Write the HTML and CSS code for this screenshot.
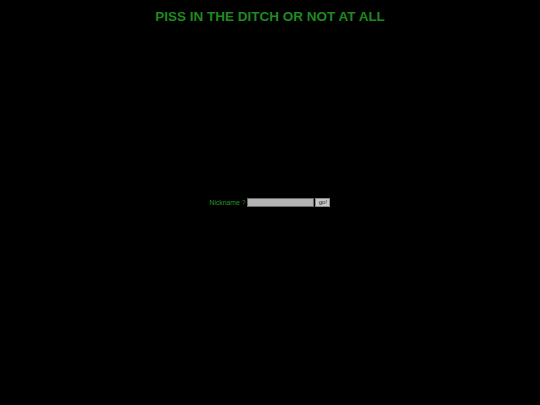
FILE: index.html
```html
<!DOCTYPE html>
<html>
<head>
<meta charset="utf-8">
<link rel="stylesheet" href="styles.css">
</head>
<body>
<div class="page">
  <h1 class="title">PISS IN THE DITCH OR NOT AT ALL</h1>
  <form class="login">
    <label class="label" for="nick">Nickname ?</label>
    <input class="field" id="nick" type="text">
    <button class="go" type="button">go!</button>
  </form>
</div>
</body>
</html>
```
FILE: styles.css
```css
html, body {
  margin: 0;
  padding: 0;
  background: #000;
  height: 100%;
}
.page {
  display: flex;
  flex-direction: column;
  align-items: center;
  font-family: "Liberation Sans", Arial, sans-serif;
}
.title {
  margin: 9px 0 0 0;
  font-size: 13.5px;
  font-weight: bold;
  color: #1f8a1f;
  line-height: 16px;
}
.login {
  margin-top: 173px;
  display: flex;
  align-items: center;
  gap: 1px;
}
.label {
  color: #239a23;
  font-size: 6.8px;
  margin-right: 1px;
}
.field {
  width: 67px;
  padding: 0;
  border: 1px solid #6a6a6a;
  background: #b4b4b4;
  box-sizing: border-box;
  height: 9px;
  font-size: 6px;
}
.go {
  width: 15px;
  height: 9px;
  padding: 0;
  margin: 0;
  font-size: 6px;
  line-height: 7px;
  font-family: "Liberation Sans", Arial, sans-serif;
  background: #c8c8c8;
  border: 1px solid #888;
  color: #222;
}
```
